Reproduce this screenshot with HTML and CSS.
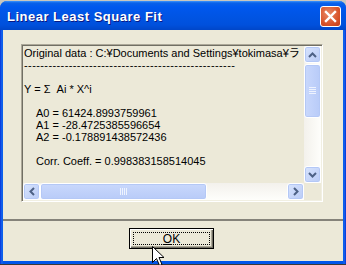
FILE: index.html
```html
<!DOCTYPE html>
<html lang="en">
<head>
  <meta charset="UTF-8" />
  <title>Linear Least Square Fit</title>
  <link rel="stylesheet" href="styles.css">
</head>
<body>
  <!-- Dialog window -->
  <div class="window">
    <div class="titlebar">
      <span class="title">Linear Least Square Fit</span>
      <div class="close-btn">
        <svg width="13" height="13" viewBox="0 0 13 13">
          <path d="M2 2 L11 11 M11 2 L2 11" stroke="#fff" stroke-width="2.4" stroke-linecap="square" />
        </svg>
      </div>
    </div>

    <div class="client">
      <!-- Result text box with scrollbars -->
      <div class="result-box">
        <div class="result-text">
          <div class="line">Original data : C:¥Documents and Settings¥tokimasa¥ラ</div>
          <div class="line dashes">----------------------------------------------------</div>
          <div class="line">&nbsp;</div>
          <div class="line">Y = &Sigma;&nbsp; Ai * X^i</div>
          <div class="line">&nbsp;</div>
          <div class="line indent">A0 = 61424.8993759961</div>
          <div class="line indent">A1 = -28.4725385596654</div>
          <div class="line indent">A2 = -0.178891438572436</div>
          <div class="line">&nbsp;</div>
          <div class="line indent">Corr. Coeff. = 0.998383158514045</div>
        </div>

        <div class="vscroll">
          <div class="sb-btn">
            <svg width="9" height="6" viewBox="0 0 9 6"><path d="M1 5 L4.5 1.5 L8 5" fill="none" stroke="#4d6185" stroke-width="2" /></svg>
          </div>
          <div class="v-thumb">
            <svg width="7" height="8" viewBox="0 0 7 8"><path d="M0 0.5 H7 M0 2.5 H7 M0 4.5 H7 M0 6.5 H7" stroke="#eef3fe" stroke-width="1" /></svg>
          </div>
          <div class="v-track"></div>
          <div class="sb-btn">
            <svg width="9" height="6" viewBox="0 0 9 6"><path d="M1 1 L4.5 4.5 L8 1" fill="none" stroke="#4d6185" stroke-width="2" /></svg>
          </div>
        </div>

        <div class="hscroll">
          <div class="sb-btn">
            <svg width="6" height="9" viewBox="0 0 6 9"><path d="M5 1 L1.5 4.5 L5 8" fill="none" stroke="#4d6185" stroke-width="2" /></svg>
          </div>
          <div class="h-thumb">
            <svg width="8" height="7" viewBox="0 0 8 7"><path d="M0.5 0 V7 M2.5 0 V7 M4.5 0 V7 M6.5 0 V7" stroke="#eef3fe" stroke-width="1" /></svg>
          </div>
          <div class="h-track"></div>
          <div class="sb-btn">
            <svg width="6" height="9" viewBox="0 0 6 9"><path d="M1 1 L4.5 4.5 L1 8" fill="none" stroke="#4d6185" stroke-width="2" /></svg>
          </div>
        </div>

        <div class="corner"></div>
      </div>

      <div class="separator"></div>

      <!-- Buttons -->
      <div class="buttons">
        <button class="ok-btn"><span class="focus-rect"><u>O</u>K</span></button>
      </div>
    </div>
  </div>

  <!-- Mouse pointer over the OK button -->
  <svg class="cursor" width="13" height="21" viewBox="0 0 13 21">
    <path d="M0.5 0.5 V16.5 L4.5 12.5 L7.5 19.5 L10 18.5 L7 11.5 H12 Z" fill="#fff" stroke="#000" stroke-width="1" />
  </svg>
</body>
</html>
```

FILE: styles.css
```css
* {
  margin: 0;
  padding: 0;
  box-sizing: border-box;
}

html, body {
  width: 346px;
  height: 265px;
  overflow: hidden;
}

body {
  background: linear-gradient(to bottom, #c9c7be 0, #c9c7be 262px, #3a3a3a 263px);
  position: relative;
  padding-top: 1px;
}

.window {
  height: 263px;
  display: flex;
  flex-direction: column;
  background: linear-gradient(to right, #0831d9 0, #166aee 2px, #0055ea 3px, #0055ea 343px, #166aee 344px, #0831d9 346px);
  border-radius: 7px 7px 0 0;
  padding: 0 3px 3px 3px;
}

.titlebar {
  height: 29px;
  margin: 0 -3px;
  padding: 0 6px 0 7px;
  display: flex;
  align-items: center;
  justify-content: space-between;
  border-radius: 7px 7px 0 0;
  background: linear-gradient(to bottom, #3d95ff 0, #0a61e8 2px, #0058ee 6px, #0054e3 16px, #0050dc 24px, #0046c8 29px);
}

.title {
  font-family: "Liberation Sans", Arial, sans-serif;
  font-weight: bold;
  font-size: 13px;
  letter-spacing: 0.5px;
  color: #fff;
  text-shadow: 1px 1px 0 #0a1883;
  margin-top: 1px;
}

.close-btn {
  width: 21px;
  height: 21px;
  border: 1px solid #fff;
  border-radius: 3px;
  background: radial-gradient(circle at 40% 35%, #e98a67 0, #d9552c 60%, #c23c16 100%);
  display: flex;
  align-items: center;
  justify-content: center;
  margin-top: 2px;
  margin-right: -1px;
}

.client {
  flex: 1;
  background: #ece9d8;
  display: flex;
  flex-direction: column;
  padding-top: 14px;
}

.result-box {
  margin-left: 18px;
  width: 302px;
  height: 158px;
  border: 1px solid;
  border-color: #aca899 #fff #fff #aca899;
  box-shadow: inset 1px 1px 0 #716f64, inset -1px -1px 0 #f1efe2;
  padding: 1px;
  display: grid;
  grid-template-columns: 1fr 17px;
  grid-template-rows: 1fr 17px;
}

.result-text {
  overflow: hidden;
  padding: 1px 0 0 1px;
  font-family: "Liberation Sans", Arial, "Noto Sans CJK JP", sans-serif;
  font-size: 11px;
  line-height: 12px;
  color: #000;
}

.line {
  white-space: nowrap;
}

.line.dashes {
  letter-spacing: 0.4px;
}

.line.indent {
  padding-left: 12px;
}

.vscroll {
  display: flex;
  flex-direction: column;
  background: linear-gradient(to right, #f3f1ec, #fefefb);
}

.hscroll {
  display: flex;
  background: linear-gradient(to bottom, #f3f1ec, #fefefb);
}

.corner {
  background: #ece9d8;
}

.sb-btn {
  width: 17px;
  height: 17px;
  flex: none;
  border: 1px solid #fff;
  border-radius: 3px;
  background: linear-gradient(to bottom right, #d8e4fd, #b9cbf6);
  box-shadow: inset 0 0 0 1px #b4c8f6;
  display: flex;
  align-items: center;
  justify-content: center;
}

.v-thumb {
  height: 54px;
  margin-top: 1px;
  border: 1px solid #fff;
  border-radius: 3px;
  background: linear-gradient(to right, #c9d8fc, #b8cbf8);
  box-shadow: inset 0 0 0 1px #b4c8f6;
  display: flex;
  align-items: center;
  justify-content: center;
}

.v-track {
  flex: 1;
}

.h-thumb {
  width: 167px;
  border: 1px solid #fff;
  border-radius: 3px;
  background: linear-gradient(to bottom, #c9d8fc, #b8cbf8);
  box-shadow: inset 0 0 0 1px #b4c8f6;
  display: flex;
  align-items: center;
  justify-content: center;
}

.h-track {
  flex: 1;
}

.separator {
  margin-top: 17px;
  height: 2px;
  background: #85837a;
}

.buttons {
  display: flex;
  padding: 7px 0 0 126px;
}

.ok-btn {
  width: 85px;
  height: 21px;
  background: #ece9d8;
  border: 1px solid #000;
  box-shadow: inset 1px 1px 0 #fff, inset -1px -1px 0 #716f64, inset -2px -2px 0 #aca899;
  padding: 3px;
  font-family: "Liberation Sans", Arial, sans-serif;
  font-size: 12px;
  color: #000;
  display: flex;
}

.focus-rect {
  flex: 1;
  border: 1px dotted #000;
  display: flex;
  align-items: center;
  justify-content: center;
  line-height: 12px;
}

.cursor {
  position: absolute;
  left: 152px;
  top: 246px;
}
```
